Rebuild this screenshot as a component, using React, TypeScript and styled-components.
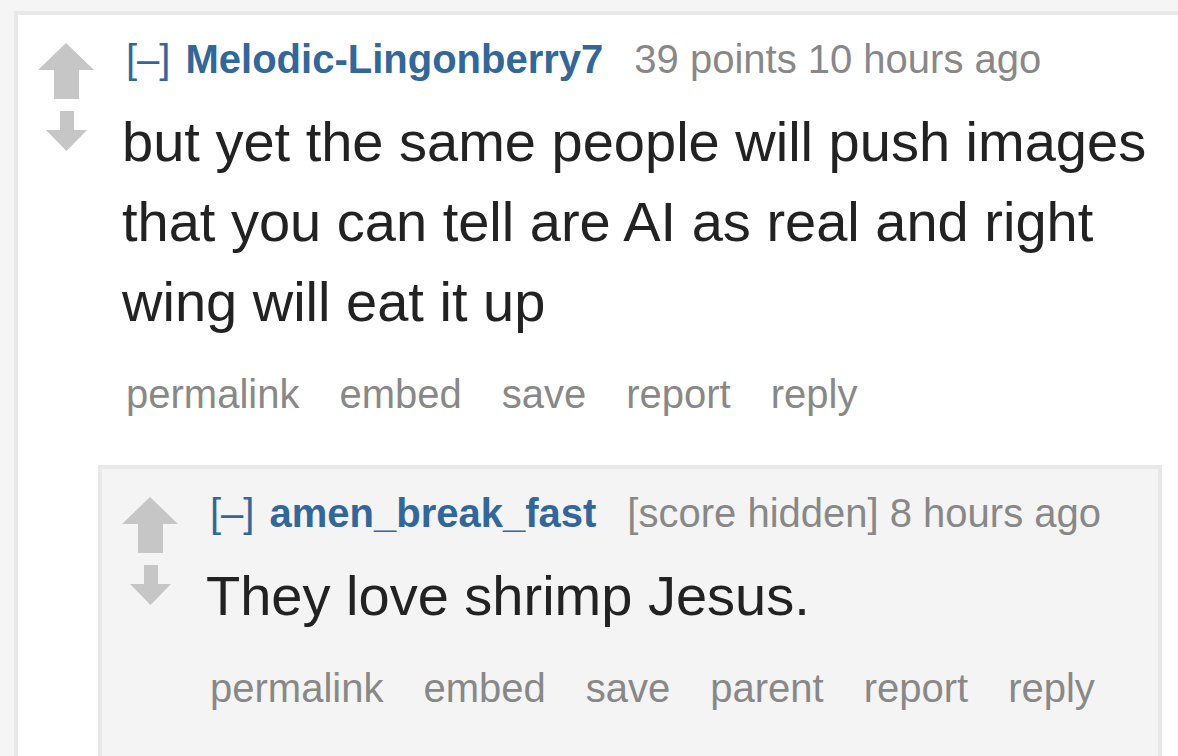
import styled, { createGlobalStyle } from "styled-components";

const GlobalStyle = createGlobalStyle`
  html, body {
    margin: 0;
    padding: 0;
    background-color: #f5f5f5;
    overflow: hidden;
  }
  body {
    font-family: "Liberation Sans", Arial, sans-serif;
  }
`;

const Page = styled.div`
  padding: 11px 0 0 14px;
`;

const CommentBox = styled.div<{ $nested?: boolean }>`
  background-color: ${(p) => (p.$nested ? "#f4f4f4" : "#ffffff")};
  border: 4px solid #e8e8e8;
  border-right: ${(p) => (p.$nested ? "4px solid #e8e8e8" : "none")};
  border-bottom: none;
  margin: ${(p) => (p.$nested ? "49px 16px 0 80px" : "0")};
  padding-bottom: ${(p) => (p.$nested ? "80px" : "0")};
`;

const Row = styled.div`
  display: flex;
  flex-direction: row;
`;

const MidCol = styled.div`
  width: 56px;
  padding: 28px 28px 0 20px;
  display: flex;
  flex-direction: column;
  align-items: center;
  gap: 12px;
  flex-shrink: 0;
`;

const Arrow = styled.svg`
  display: block;
  fill: #c6c6c6;
  filter: blur(0.5px);
`;

const Entry = styled.div`
  flex: 1;
  padding-top: 22px;
  min-width: 0;
`;

const Tagline = styled.div`
  display: flex;
  align-items: baseline;
  padding-left: 4px;
  font-size: 40px;
  line-height: 44px;
  white-space: nowrap;
`;

const Expand = styled.a`
  color: #336699;
  margin-right: 15px;
`;

const Author = styled.a`
  color: #336699;
  font-weight: bold;
  margin-right: 31px;
`;

const Meta = styled.span`
  color: #888888;
`;

const Body = styled.p`
  margin: 21px 0 0 0;
  font-size: 56px;
  line-height: 80px;
  color: #222222;
`;

const Buttons = styled.ul`
  display: flex;
  gap: 40px;
  list-style: none;
  margin: 30px 0 0 0;
  padding: 0 0 0 4px;
  font-size: 40px;
  line-height: 44px;
  color: #888888;
`;

const Button = styled.li`
  white-space: nowrap;
`;

function Votes() {
  return (
    <MidCol>
      <Arrow width="56" height="56" viewBox="0 0 56 56">
        <path d="M28 0 L56 27 L41 27 L41 56 L16 56 L16 27 L0 27 Z" />
      </Arrow>
      <Arrow width="41" height="40" viewBox="0 0 41 40">
        <path d="M14 0 L28 0 L28 19 L41 19 L20.5 40 L0 19 L14 19 Z" />
      </Arrow>
    </MidCol>
  );
}

interface CommentProps {
  author: string;
  meta: string;
  body: string;
  buttons: string[];
}

function CommentRow({ author, meta, body, buttons }: CommentProps) {
  return (
    <Row>
      <Votes />
      <Entry>
        <Tagline>
          <Expand>[–]</Expand>
          <Author>{author}</Author>
          <Meta>{meta}</Meta>
        </Tagline>
        <Body>{body}</Body>
        <Buttons>
          {buttons.map((b) => (
            <Button key={b}>{b}</Button>
          ))}
        </Buttons>
      </Entry>
    </Row>
  );
}

export default function App() {
  return (
    <Page>
      <GlobalStyle />
      <CommentBox>
        <CommentRow
          author="Melodic-Lingonberry7"
          meta="39 points 10 hours ago"
          body="but yet the same people will push images that you can tell are AI as real and right wing will eat it up"
          buttons={["permalink", "embed", "save", "report", "reply"]}
        />
        <CommentBox $nested>
          <CommentRow
            author="amen_break_fast"
            meta="[score hidden] 8 hours ago"
            body="They love shrimp Jesus."
            buttons={["permalink", "embed", "save", "parent", "report", "reply"]}
          />
        </CommentBox>
      </CommentBox>
    </Page>
  );
}
